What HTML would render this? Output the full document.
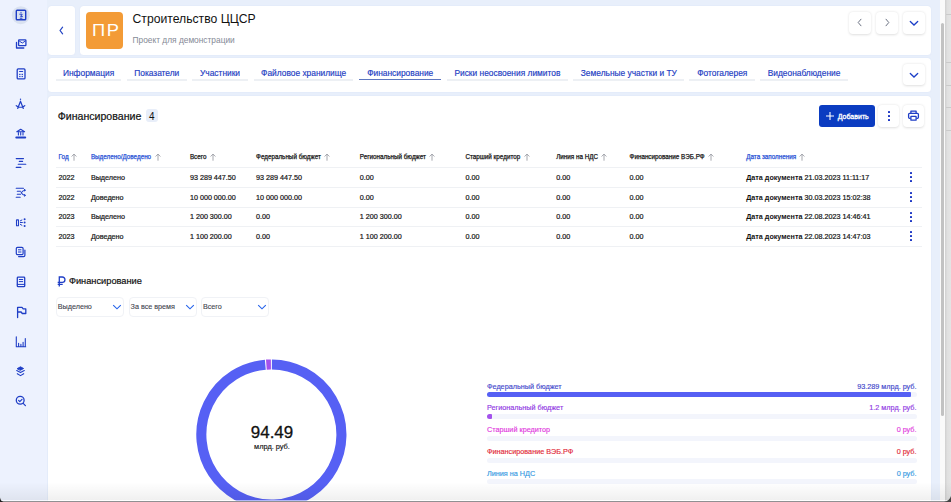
<!DOCTYPE html><html><head><meta charset="utf-8"><style>
*{box-sizing:border-box;margin:0;padding:0}
html,body{width:951px;height:502px;overflow:hidden;background:#dedede;font-family:"Liberation Sans",sans-serif;color:#151515}
.abs{position:absolute}
#vp{position:absolute;left:0;top:0;width:940px;height:501px;background:#e8effb;overflow:hidden}
#side{position:absolute;left:0;top:0;width:46.5px;height:501px;background:#edf2fe}
.card{position:absolute;background:#fff;border-radius:3.5px;box-shadow:0 0 1px rgba(170,185,225,.35)}
.t{position:absolute;white-space:nowrap;line-height:1}
.btn{position:absolute;width:22px;height:22px;background:#fff;border-radius:4px;box-shadow:0 0.5px 2.5px rgba(0,0,0,.13)}
.tab{position:absolute;top:78.8px;height:1.8px;background:#edf0f4}
.tabt{position:absolute;top:68.7px;font-size:8.4px;color:#1b3bc2;-webkit-text-stroke:0.15px currentColor;line-height:1;white-space:nowrap;text-align:center}
.hd{position:absolute;top:154px;font-size:6.3px;color:#1a1a1a;white-space:nowrap;line-height:1;-webkit-text-stroke:0.25px currentColor}
.hd.b{color:#2c55d6}
.sep{position:absolute;left:56px;width:866px;height:1px;background:#eff1f4}
.c{position:absolute;font-size:7.2px;white-space:nowrap;line-height:1;color:#141414;-webkit-text-stroke:0.2px #141414}
.keb{position:absolute;left:910px;width:2px}
.keb i{display:block;width:2px;height:2px;background:#1a35c4;border-radius:0.6px;margin-bottom:2px}
.dd{position:absolute;top:296.5px;height:20px;border:1px solid #f0f2f6;border-radius:4px;background:#fff}
.dd span{position:absolute;left:0.8px;top:5.9px;font-size:7.2px;color:#3c414c;-webkit-text-stroke:0.1px currentColor;white-space:nowrap;line-height:1}
.dd svg{position:absolute;top:6.8px}
.lgl{position:absolute;left:487px;font-size:7.25px;line-height:1;white-space:nowrap;-webkit-text-stroke:0.15px currentColor}
.lgr{position:absolute;right:24px;font-size:7.25px;line-height:1;white-space:nowrap;text-align:right}
.tr{position:absolute;left:487px;width:429.5px;height:5px;border-radius:2.5px;background:#f3f5fc}
.fl{position:absolute;left:487px;height:5px;border-radius:2.5px}
.si{position:absolute;left:0;width:47px;height:30px}
</style></head><body><div id="vp">
<div id="side"></div>
<svg class="abs" style="left:0;top:0" width="47" height="420" viewBox="0 0 47 420" fill="none" stroke="#1f3ec6" stroke-width="1.3" stroke-linecap="round" stroke-linejoin="round">
<circle cx="20.8" cy="15.2" r="9" fill="#d9e1f0" stroke="none"/>
<rect x="16.3" y="10.3" width="9.4" height="9.4" rx="0.8" stroke-width="1.4"/>
<path d="M21 12.3v0.2M19.8 14.2h2.4l-1.6 2.2h1.8M20.2 18.2h1.8" stroke-width="1"/>
<path d="M16.5 42.5v5.5h7.3" />
<rect x="18.6" y="39.8" width="7.3" height="5.8" rx="0.6"/>
<path d="M19.5 41.2l2.8 1.8l2.8-1.8" stroke-width="1"/>
<rect x="17.2" y="68.9" width="7.8" height="10" rx="1"/>
<path d="M19.6 71.5h3" stroke-width="1.2"/>
<rect x="19.2" y="73.8" width="1.3" height="1.2" fill="#1f3ec6" stroke="none"/><rect x="21.6" y="73.8" width="1.3" height="1.2" fill="#1f3ec6" stroke="none"/><rect x="19.2" y="75.9" width="1.3" height="1.2" fill="#1f3ec6" stroke="none"/><rect x="21.6" y="75.9" width="1.3" height="1.2" fill="#1f3ec6" stroke="none"/>
<circle cx="20.5" cy="99.2" r="0.7" fill="#1f3ec6" stroke="none"/>
<path d="M20.5 101.2l-2.8 7.3M20.5 101.2l2.8 7.3M16.2 105.6c1.8 2.2 6.8 2.2 8.6 0" stroke-width="1.2"/>
<path d="M16.8 131.8l3.9-2.5l3.9 2.5z" stroke-width="1.1"/>
<path d="M18.4 132.6v2.4M20.7 132.6v2.4M23 132.6v2.4" stroke-width="1.1"/>
<path d="M16.3 137.4h8.9" stroke-width="2"/>
<path d="M16.2 158.6h7.3M19.3 161.4h3.3M18.2 164.2h7.6M16.2 167.4h4.7" stroke-width="1.1"/>
<path d="M16.2 188.3h7.3M17.3 191.3h3.2M17.3 194.3h3.2M16.2 197.2h4M21.2 192.8c1.5-2.3 2.2-2.6 4-2.6M21.2 192.8c1.5 2.3 2.2 2.6 4 2.6" stroke-width="1.1"/>
<path d="M24.3 189.4l1 0.8l-1 0.8M24.3 194.6l1 0.8l-1 0.8" stroke-width="1"/>
<rect x="16.5" y="219.9" width="2" height="5.8" rx="0.3" stroke-width="1.1"/>
<path d="M20.4 220.8l1.5-0.8M20.4 222.5h2M20.4 224.4l1.5 0.9" stroke-width="1"/>
<circle cx="24.6" cy="219.2" r="1" fill="#1f3ec6" stroke="none"/><circle cx="24.6" cy="222.6" r="1" fill="#1f3ec6" stroke="none"/><circle cx="24.6" cy="226" r="1" fill="#1f3ec6" stroke="none"/>
<rect x="16.3" y="247.3" width="6.8" height="7.4" rx="1.2" stroke-width="1.2"/>
<path d="M18.4 249.8h2.6M18.4 252h2.6" stroke-width="1"/>
<path d="M24.9 250v5.3c0 0.8-0.5 1.3-1.3 1.3h-5" stroke-width="1.2"/>
<rect x="17.3" y="277.1" width="7.4" height="9.6" rx="0.8" stroke-width="1.3"/>
<path d="M19.3 279.5h3.4M19.3 281.6h3.4M17.3 284.4h7.4" stroke-width="1"/>
<path d="M17.6 317.6v-10.3h4.4l1.2 1.6h2.6v4.6h-3.5l-1.2-1.5h-3.5" stroke-width="1.3"/>
<path d="M16.3 336.8v10h9.4M18.6 343.2v3M20.9 344.2v2M23.1 342.2v4M25.3 338.6v8" stroke-width="1.1"/>
<path d="M17.4 368.5l3.1-1.7l3.1 1.7l-3.1 1.7z" fill="#1f3ec6" stroke-width="0.9"/>
<path d="M16.7 370.6l3.8 2l3.8-2M17.3 373.7l3.2 1.9l3.2-1.9" stroke-width="1.1"/>
<circle cx="20.2" cy="400.2" r="3.9" stroke-width="1.3"/>
<path d="M18.6 400.4l1.2 1.2l2.2-2.3M23.2 403.4l2.2 2.2" stroke-width="1.2"/>
</svg>
<div class="card" style="left:47.5px;top:5.5px;width:27.5px;height:49.2px"></div>
<svg class="abs" style="left:58px;top:26px" width="7" height="9" viewBox="0 0 7 9"><path d="M4.6 1.2 L2.1 4.5 L4.6 7.8" fill="none" stroke="#2344c4" stroke-width="1.2" stroke-linecap="round"/></svg>
<div class="card" style="left:80px;top:5.5px;width:851px;height:49.2px"></div>
<div class="abs" style="left:86.2px;top:11.5px;width:37px;height:37.5px;background:#f39b36;border-radius:4px"></div>
<div class="t" style="left:92px;top:21.8px;font-size:17.3px;color:#fff;letter-spacing:1.4px;transform:scaleX(1.06);transform-origin:left top">ПР</div>
<div class="t" style="left:132.5px;top:12.6px;font-size:12.2px;color:#111">Строительство ЦЦСР</div>
<div class="t" style="left:132.5px;top:35.9px;font-size:8.36px;color:#858a96">Проект для демонстрации</div>
<div class="btn" style="left:849px;top:11.5px"></div>
<div class="btn" style="left:876px;top:11.5px"></div>
<div class="btn" style="left:903px;top:11.5px"></div>
<svg class="abs" style="left:856px;top:18px" width="8" height="9" viewBox="0 0 8 9"><path d="M5 1.2 L2.2 4.5 L5 7.8" fill="none" stroke="#6b7282" stroke-width="1" stroke-linecap="round"/></svg>
<svg class="abs" style="left:883px;top:18px" width="8" height="9" viewBox="0 0 8 9"><path d="M3 1.2 L5.8 4.5 L3 7.8" fill="none" stroke="#6b7282" stroke-width="1" stroke-linecap="round"/></svg>
<svg class="abs" style="left:909px;top:19.5px" width="10" height="7" viewBox="0 0 10 7"><path d="M1.3 1.5 L5 5 L8.7 1.5" fill="none" stroke="#1d3fc8" stroke-width="1.3" stroke-linecap="round"/></svg>
<div class="card" style="left:47.5px;top:58px;width:883px;height:34px"></div>
<div class="tab" style="left:55.8px;width:65.60000000000001px"></div>
<div class="tabt" style="left:55.8px;width:65.60000000000001px">Информация</div>
<div class="tab" style="left:126.5px;width:60.5px"></div>
<div class="tabt" style="left:126.5px;width:60.5px">Показатели</div>
<div class="tab" style="left:192.1px;width:55.900000000000006px"></div>
<div class="tabt" style="left:192.1px;width:55.900000000000006px">Участники</div>
<div class="tab" style="left:253.8px;width:99.69999999999999px"></div>
<div class="tabt" style="left:253.8px;width:99.69999999999999px">Файловое хранилище</div>
<div class="tab" style="left:359px;width:82.39999999999998px;background:#5d76c0;height:1.7px;top:78.8px"></div>
<div class="tabt" style="left:359px;width:82.39999999999998px">Финансирование</div>
<div class="tab" style="left:446.8px;width:121.19999999999999px"></div>
<div class="tabt" style="left:446.8px;width:121.19999999999999px">Риски неосвоения лимитов</div>
<div class="tab" style="left:573.4px;width:110.89999999999998px"></div>
<div class="tabt" style="left:573.4px;width:110.89999999999998px">Земельные участки и ТУ</div>
<div class="tab" style="left:689.3px;width:65.90000000000009px"></div>
<div class="tabt" style="left:689.3px;width:65.90000000000009px">Фотогалерея</div>
<div class="tab" style="left:760.4px;width:87.30000000000007px"></div>
<div class="tabt" style="left:760.4px;width:87.30000000000007px">Видеонаблюдение</div>
<div class="btn" style="left:903px;top:64px;width:21.5px;height:21px"></div>
<svg class="abs" style="left:909px;top:71.5px" width="10" height="7" viewBox="0 0 10 7"><path d="M1.3 1.5 L5 5 L8.7 1.5" fill="none" stroke="#1d3fc8" stroke-width="1.3" stroke-linecap="round"/></svg>
<div class="card" style="left:47.5px;top:95.5px;width:883px;height:420px"></div>
<div class="t" style="left:57.7px;top:110.8px;font-size:10.6px;color:#111;-webkit-text-stroke:0.2px #111">Финансирование</div>
<div class="abs" style="left:145.8px;top:109px;width:12.2px;height:13px;background:#e8eef9;border-radius:3px"></div>
<div class="t" style="left:149px;top:111.5px;font-size:10px;color:#111">4</div>
<div class="abs" style="left:819px;top:105px;width:55.5px;height:21.5px;background:#0b3cc1;border-radius:3px"></div>
<svg class="abs" style="left:825px;top:111px" width="10" height="10" viewBox="0 0 10 10"><path d="M5 1v8M1 5h8" stroke="#fff" stroke-width="1.1"/></svg>
<div class="t" style="left:837.8px;top:112.9px;font-size:7px;color:#fff;-webkit-text-stroke:0.3px #fff">Добавить</div>
<div class="btn" style="left:878px;top:105px;width:21px;height:21.5px"></div>
<div class="keb" style="left:887.5px;top:110.5px"><i></i><i></i><i></i></div>
<div class="btn" style="left:902.5px;top:105px;width:21.5px;height:21.5px"></div>
<svg class="abs" style="left:907px;top:109px" width="13" height="13" viewBox="0 0 13 13" fill="none" stroke="#1f3ec6" stroke-width="1.3" stroke-linejoin="round">
<path d="M3.9 4.3V2.1h5.2v2.2"/><path d="M3.6 9.3H2.6a1 1 0 0 1-1-1V5.3a1 1 0 0 1 1-1h7.8a1 1 0 0 1 1 1v3a1 1 0 0 1-1 1H9.4"/><rect x="3.9" y="7.3" width="5.2" height="3.9" rx="0.3"/></svg>
<div class="hd b" style="left:58.6px">Год</div>
<svg class="abs" style="left:71.4px;top:153px" width="6" height="8" viewBox="0 0 6 8"><path d="M3 1.1v6.6M0.6 3.5l2.4-2.4l2.4 2.4" fill="none" stroke="#8f929b" stroke-width="0.8"/></svg>
<div class="hd b" style="left:90.9px">Выделено/Доведено</div>
<svg class="abs" style="left:155px;top:153px" width="6" height="8" viewBox="0 0 6 8"><path d="M3 1.1v6.6M0.6 3.5l2.4-2.4l2.4 2.4" fill="none" stroke="#8f929b" stroke-width="0.8"/></svg>
<div class="hd" style="left:189.9px">Всего</div>
<svg class="abs" style="left:209.6px;top:153px" width="6" height="8" viewBox="0 0 6 8"><path d="M3 1.1v6.6M0.6 3.5l2.4-2.4l2.4 2.4" fill="none" stroke="#8f929b" stroke-width="0.8"/></svg>
<div class="hd" style="left:256.1px">Федеральный бюджет</div>
<svg class="abs" style="left:324px;top:153px" width="6" height="8" viewBox="0 0 6 8"><path d="M3 1.1v6.6M0.6 3.5l2.4-2.4l2.4 2.4" fill="none" stroke="#8f929b" stroke-width="0.8"/></svg>
<div class="hd" style="left:359.8px">Региональный бюджет</div>
<svg class="abs" style="left:429px;top:153px" width="6" height="8" viewBox="0 0 6 8"><path d="M3 1.1v6.6M0.6 3.5l2.4-2.4l2.4 2.4" fill="none" stroke="#8f929b" stroke-width="0.8"/></svg>
<div class="hd" style="left:465.4px">Старший кредитор</div>
<svg class="abs" style="left:524px;top:153px" width="6" height="8" viewBox="0 0 6 8"><path d="M3 1.1v6.6M0.6 3.5l2.4-2.4l2.4 2.4" fill="none" stroke="#8f929b" stroke-width="0.8"/></svg>
<div class="hd" style="left:556.2px">Линия на НДС</div>
<svg class="abs" style="left:601px;top:153px" width="6" height="8" viewBox="0 0 6 8"><path d="M3 1.1v6.6M0.6 3.5l2.4-2.4l2.4 2.4" fill="none" stroke="#8f929b" stroke-width="0.8"/></svg>
<div class="hd" style="left:629.6px">Финансирование ВЭБ.РФ</div>
<svg class="abs" style="left:707.8px;top:153px" width="6" height="8" viewBox="0 0 6 8"><path d="M3 1.1v6.6M0.6 3.5l2.4-2.4l2.4 2.4" fill="none" stroke="#8f929b" stroke-width="0.8"/></svg>
<div class="hd b" style="left:746.2px">Дата заполнения</div>
<svg class="abs" style="left:799.4px;top:153px" width="6" height="8" viewBox="0 0 6 8"><path d="M3 1.1v6.6M0.6 3.5l2.4-2.4l2.4 2.4" fill="none" stroke="#8f929b" stroke-width="0.8"/></svg>
<div class="sep" style="top:167px"></div>
<div class="sep" style="top:186.8px"></div>
<div class="sep" style="top:206.5px"></div>
<div class="sep" style="top:226.2px"></div>
<div class="sep" style="top:246px"></div>
<div class="c" style="left:58.6px;top:173.9px">2022</div>
<div class="c" style="left:90.9px;top:173.9px">Выделено</div>
<div class="c" style="left:189.9px;top:173.9px">93 289 447.50</div>
<div class="c" style="left:256.1px;top:173.9px">93 289 447.50</div>
<div class="c" style="left:359.8px;top:173.9px">0.00</div>
<div class="c" style="left:465.4px;top:173.9px">0.00</div>
<div class="c" style="left:556.2px;top:173.9px">0.00</div>
<div class="c" style="left:629.6px;top:173.9px">0.00</div>
<div class="c" style="left:746.2px;top:173.9px"><b style="-webkit-text-stroke:0">Дата документа</b> 21.03.2023 11:11:17</div>
<div class="keb" style="top:172.00px"><i></i><i></i><i></i></div>
<div class="c" style="left:58.6px;top:193.65px">2022</div>
<div class="c" style="left:90.9px;top:193.65px">Доведено</div>
<div class="c" style="left:189.9px;top:193.65px">10 000 000.00</div>
<div class="c" style="left:256.1px;top:193.65px">10 000 000.00</div>
<div class="c" style="left:359.8px;top:193.65px">0.00</div>
<div class="c" style="left:465.4px;top:193.65px">0.00</div>
<div class="c" style="left:556.2px;top:193.65px">0.00</div>
<div class="c" style="left:629.6px;top:193.65px">0.00</div>
<div class="c" style="left:746.2px;top:193.65px"><b style="-webkit-text-stroke:0">Дата документа</b> 30.03.2023 15:02:38</div>
<div class="keb" style="top:191.75px"><i></i><i></i><i></i></div>
<div class="c" style="left:58.6px;top:213.4px">2023</div>
<div class="c" style="left:90.9px;top:213.4px">Выделено</div>
<div class="c" style="left:189.9px;top:213.4px">1 200 300.00</div>
<div class="c" style="left:256.1px;top:213.4px">0.00</div>
<div class="c" style="left:359.8px;top:213.4px">1 200 300.00</div>
<div class="c" style="left:465.4px;top:213.4px">0.00</div>
<div class="c" style="left:556.2px;top:213.4px">0.00</div>
<div class="c" style="left:629.6px;top:213.4px">0.00</div>
<div class="c" style="left:746.2px;top:213.4px"><b style="-webkit-text-stroke:0">Дата документа</b> 22.08.2023 14:46:41</div>
<div class="keb" style="top:211.50px"><i></i><i></i><i></i></div>
<div class="c" style="left:58.6px;top:233.15px">2023</div>
<div class="c" style="left:90.9px;top:233.15px">Доведено</div>
<div class="c" style="left:189.9px;top:233.15px">1 100 200.00</div>
<div class="c" style="left:256.1px;top:233.15px">0.00</div>
<div class="c" style="left:359.8px;top:233.15px">1 100 200.00</div>
<div class="c" style="left:465.4px;top:233.15px">0.00</div>
<div class="c" style="left:556.2px;top:233.15px">0.00</div>
<div class="c" style="left:629.6px;top:233.15px">0.00</div>
<div class="c" style="left:746.2px;top:233.15px"><b style="-webkit-text-stroke:0">Дата документа</b> 22.08.2023 14:47:03</div>
<div class="keb" style="top:231.25px"><i></i><i></i><i></i></div>
<svg class="abs" style="left:56.5px;top:275.5px" width="9" height="11" viewBox="0 0 9 11" fill="none" stroke="#1f3ec6" stroke-width="1.3"><path d="M2.3 10.5V1h3a2.6 2.6 0 0 1 0 5.3H0.7M0.7 8.3h5"/></svg>
<div class="t" style="left:68.9px;top:277px;font-size:9.26px;color:#111;-webkit-text-stroke:0.2px #111">Финансирование</div>
<div class="dd" style="left:56px;width:67.8px"><span>Выделено</span><svg style="left:54.8px" width="10" height="6" viewBox="0 0 10 6"><path d="M1.2 1.2l3.8 3.6l3.8-3.6" fill="none" stroke="#2563eb" stroke-width="1.15"/></svg></div>
<div class="dd" style="left:128.8px;width:68.19999999999999px"><span>За все время</span><svg style="left:55.19999999999999px" width="10" height="6" viewBox="0 0 10 6"><path d="M1.2 1.2l3.8 3.6l3.8-3.6" fill="none" stroke="#2563eb" stroke-width="1.15"/></svg></div>
<div class="dd" style="left:201.2px;width:68.19999999999999px"><span>Всего</span><svg style="left:55.19999999999999px" width="10" height="6" viewBox="0 0 10 6"><path d="M1.2 1.2l3.8 3.6l3.8-3.6" fill="none" stroke="#2563eb" stroke-width="1.15"/></svg></div>
<svg class="abs" style="left:0;top:0" width="951" height="502" viewBox="0 0 951 502">
<path d="M271.89 364.45 A70.05 70.05 0 1 1 265.33 364.71" fill="none" stroke="#5660f4" stroke-width="10.1"/>
<path d="M266.36 364.63 A70.05 70.05 0 0 1 270.91 364.45" fill="none" stroke="#a452ec" stroke-width="10.1"/>
</svg>
<div class="t" style="left:250px;top:425px;font-size:16.9px;color:#111;width:44px;text-align:center;-webkit-text-stroke:0.3px #111">94.49</div>
<div class="t" style="left:252.5px;top:442.9px;font-size:7.4px;color:#111;width:39px;text-align:center;-webkit-text-stroke:0.15px #111">млрд. руб.</div>
<div class="lgl" style="top:382.56px;color:#3f47cc">Федеральный бюджет</div>
<div class="t" style="left:700px;width:216.5px;text-align:right;top:382.56px;font-size:7.25px;color:#3f47cc;-webkit-text-stroke:0.15px #3f47cc">93.289 млрд. руб.</div>
<div class="tr" style="top:392.20px"></div>
<div class="fl" style="top:392.20px;width:424.2px;background:#5660f4;border-radius:2.5px 1px 1px 2.5px"></div>
<div class="lgl" style="top:404.36px;color:#9038e4">Региональный бюджет</div>
<div class="t" style="left:700px;width:216.5px;text-align:right;top:404.36px;font-size:7.25px;color:#9038e4;-webkit-text-stroke:0.15px #9038e4">1.2 млрд. руб.</div>
<div class="tr" style="top:414.00px"></div>
<div class="fl" style="top:414.00px;width:4.8px;background:#a452ec;border-radius:2.5px 1px 1px 2.5px"></div>
<div class="lgl" style="top:426.16px;color:#e23ade">Старший кредитор</div>
<div class="t" style="left:700px;width:216.5px;text-align:right;top:426.16px;font-size:7.25px;color:#e23ade;-webkit-text-stroke:0.15px #e23ade">0 руб.</div>
<div class="tr" style="top:435.80px"></div>
<div class="lgl" style="top:447.96px;color:#e22a38">Финансирование ВЭБ.РФ</div>
<div class="t" style="left:700px;width:216.5px;text-align:right;top:447.96px;font-size:7.25px;color:#e22a38;-webkit-text-stroke:0.15px #e22a38">0 руб.</div>
<div class="tr" style="top:457.60px"></div>
<div class="lgl" style="top:469.76px;color:#3599e2">Линия на НДС</div>
<div class="t" style="left:700px;width:216.5px;text-align:right;top:469.76px;font-size:7.25px;color:#3599e2;-webkit-text-stroke:0.15px #3599e2">0 руб.</div>
<div class="tr" style="top:479.40px"></div>
</div>
<div class="abs" style="left:940px;top:0;width:5px;height:501px;background:#fafafa"></div>
<div class="abs" style="left:941px;top:22.7px;width:3px;height:393.5px;background:#c2c2c2;border-radius:1.5px"></div>
<div class="abs" style="left:945px;top:0;width:6px;height:502px;background:linear-gradient(to right,#d0d0d0,#e0e0e0 40%,#e4e4e4)"></div>
<div class="abs" style="left:946px;top:14px;width:5px;height:1px;background:#cacaca"></div>
<div class="abs" style="left:946px;top:62px;width:5px;height:1px;background:#cacaca"></div>
<div class="abs" style="left:946px;top:85px;width:5px;height:1px;background:#cacaca"></div>
<div class="abs" style="left:946px;top:107px;width:5px;height:1px;background:#cacaca"></div>
<div class="abs" style="left:946px;top:130px;width:5px;height:1px;background:#cacaca"></div>
<div class="abs" style="left:0;top:482px;width:951px;height:18px;background:linear-gradient(to bottom,rgba(0,0,0,0),rgba(0,0,0,0.06))"></div>
<div class="abs" style="left:0;top:499.6px;width:951px;height:1px;background:rgba(255,255,255,0.55)"></div>
<div class="abs" style="left:0;top:500.7px;width:951px;height:1.3px;background:#909092"></div>
<svg class="abs" style="left:0;top:0" width="951" height="502"><path d="M0 497.5Q0.5 501 3.5 502H0z" fill="#222"/><path d="M951 496Q949.5 501 944 502H951z" fill="#444"/></svg>
</body></html>
